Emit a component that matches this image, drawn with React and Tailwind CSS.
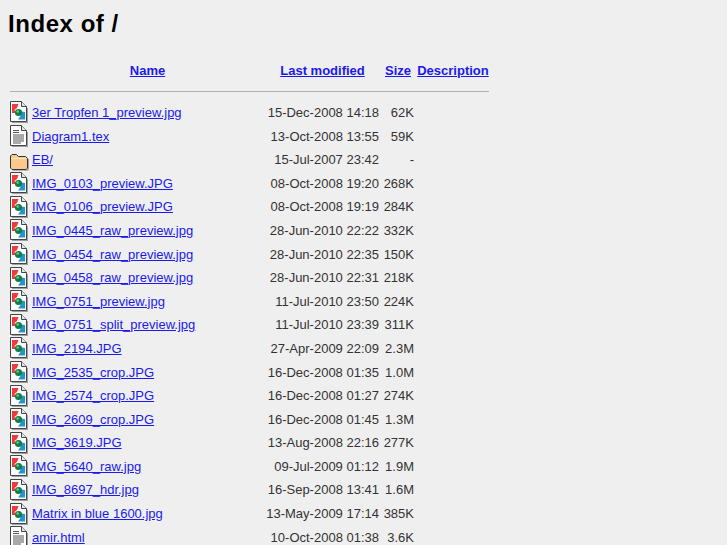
const files = [
  ["image", "3er Tropfen 1_preview.jpg", "15-Dec-2008 14:18", "62K"],
  ["text", "Diagram1.tex", "13-Oct-2008 13:55", "59K"],
  ["folder", "EB/", "15-Jul-2007 23:42", "-"],
  ["image", "IMG_0103_preview.JPG", "08-Oct-2008 19:20", "268K"],
  ["image", "IMG_0106_preview.JPG", "08-Oct-2008 19:19", "284K"],
  ["image", "IMG_0445_raw_preview.jpg", "28-Jun-2010 22:22", "332K"],
  ["image", "IMG_0454_raw_preview.jpg", "28-Jun-2010 22:35", "150K"],
  ["image", "IMG_0458_raw_preview.jpg", "28-Jun-2010 22:31", "218K"],
  ["image", "IMG_0751_preview.jpg", "11-Jul-2010 23:50", "224K"],
  ["image", "IMG_0751_split_preview.jpg", "11-Jul-2010 23:39", "311K"],
  ["image", "IMG_2194.JPG", "27-Apr-2009 22:09", "2.3M"],
  ["image", "IMG_2535_crop.JPG", "16-Dec-2008 01:35", "1.0M"],
  ["image", "IMG_2574_crop.JPG", "16-Dec-2008 01:27", "274K"],
  ["image", "IMG_2609_crop.JPG", "16-Dec-2008 01:45", "1.3M"],
  ["image", "IMG_3619.JPG", "13-Aug-2008 22:16", "277K"],
  ["image", "IMG_5640_raw.jpg", "09-Jul-2009 01:12", "1.9M"],
  ["image", "IMG_8697_hdr.jpg", "16-Sep-2008 13:41", "1.6M"],
  ["image", "Matrix in blue 1600.jpg", "13-May-2009 17:14", "385K"],
  ["text", "amir.html", "10-Oct-2008 01:38", "3.6K"],
];

const Page = ({ children }) => (
  <svg width="19" height="22" viewBox="0 0 19 22" className="block">
    <path d="M2 21.250H17.250V7" fill="none" stroke="#a0a0a0" strokeWidth="1.500" />
    <path d="M.500 .500H11.500L16.500 5.500V20.500H.500Z" fill="#fff" stroke="#444" />
    <path d="M11.500 .500V5.500H16.500" fill="#e4e4e4" stroke="#444" />
    {children}
  </svg>
);

const FileIcon = ({ type }) => {
  if (type === "folder") {
    return (
      <svg width="19" height="22" viewBox="0 0 19 22" className="block">
        <path d="M2.500 21H17.500L18.500 20V10" fill="none" stroke="#a0a0a0" strokeWidth="1.500" />
        <path d="M.500 8V7L2 5.500H6.500L8.500 7.500H15.500L17.500 9.500V19L16 20.500H2L.500 19Z" fill="#fbc88e" stroke="#333" />
        <path d="M1.500 9.500H15.500" fill="none" stroke="#fde6c8" />
      </svg>
    );
  }
  if (type === "text") {
    return (
      <Page>
        <path d="M3 5.500H9M3 7.500H9M3 10H14M3 12H14M3 14H14M3 16H14M3 18H11" stroke="#555" strokeWidth="1.200" />
      </Page>
    );
  }
  return (
    <Page>
      <path d="M2 3H8.500L7 7L4.500 9L6 12H2Z" fill="#f23a3a" />
      <path d="M11.500 10.500L15 11V18.500H8L10.500 15Z" fill="#2294cf" />
      <circle cx="8.500" cy="11.500" r="3.600" fill="#127e46" />
      <circle cx="7.700" cy="10.500" r="1.300" fill="#6cc896" />
    </Page>
  );
};

const Header = ({ children }) => (
  <div className="text-center font-bold">
    <a href="#" className="text-[#1a1aee] underline">{children}</a>
  </div>
);

export default function App() {
  return (
    <div className="h-[545px] overflow-hidden bg-[#efefef] text-[13px] leading-[15px] text-[#333333] font-['Liberation_Sans',Arial,sans-serif]">
      <h1 className="pl-2 pt-[10px] pb-[22px] text-[24px] leading-[28px] tracking-[0.55px] font-bold text-black">Index of /</h1>
      <div className="ml-[10px] w-[479px]">
        <div className="grid grid-cols-[19px_231px_113px_32px_72px] gap-x-[3px] items-center h-[20px]">
          <div></div>
          <Header>Name</Header>
          <Header>Last modified</Header>
          <Header>Size</Header>
          <Header>Description</Header>
        </div>
        <hr className="mt-[11px] mb-[8.7px] border-t border-[#b0b0b0]" />
        {files.map(([type, name, date, size]) => (
          <div key={name} className="grid grid-cols-[19px_231px_113px_32px_72px] gap-x-[3px] items-center h-[23.6px]">
            <FileIcon type={type} />
            <div className="whitespace-nowrap">
              <a href="#" className="text-[#1a1aee] underline">{name}</a>
            </div>
            <div className="text-right whitespace-nowrap">{date}</div>
            <div className="text-right whitespace-nowrap">{size}</div>
            <div></div>
          </div>
        ))}
      </div>
    </div>
  );
}
